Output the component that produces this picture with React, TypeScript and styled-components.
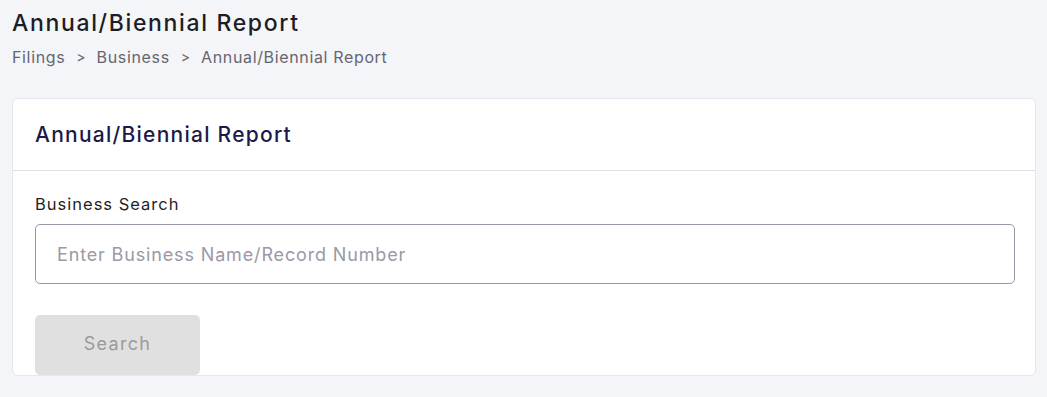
import React from "react";
import styled, { createGlobalStyle } from "styled-components";

const Global = createGlobalStyle`
  html, body { margin: 0; padding: 0; background: #f4f5f9; }
  body { font-family: "Inter", "Open Sans", sans-serif; }
  * { box-sizing: border-box; }
`;

const Page = styled.div`
  padding: 8px 11px 20px 12px;
  display: flex;
  flex-direction: column;
`;

const Title = styled.h1`
  margin: 0;
  font-size: 23px;
  line-height: 30px;
  font-weight: 500;
  letter-spacing: 1.65px;
  color: #1d1d24;
`;

const Crumbs = styled.nav`
  display: flex;
  align-items: center;
  gap: 11px;
  margin-top: 8px;
  font-size: 16px;
  line-height: 22px;
  letter-spacing: 0.65px;
  color: #66666e;
`;

const Sep = styled.span`
  font-size: 14px;
  letter-spacing: 0;
  color: #66666e;
`;

const Card = styled.section`
  margin-top: 30px;
  background: #ffffff;
  border: 1px solid #e7e8ee;
  border-radius: 6px;
  overflow: hidden;
`;

const CardHeader = styled.div`
  height: 72px;
  padding: 0 22px;
  display: flex;
  align-items: center;
  border-bottom: 1px solid #dde0e4;
`;

const CardTitle = styled.h2`
  margin: 0;
  font-size: 21px;
  font-weight: 500;
  letter-spacing: 1.25px;
  color: #1c1a4a;
`;

const CardBody = styled.div`
  padding: 22px 20px 0 22px;
  display: flex;
  flex-direction: column;
  align-items: flex-start;
`;

const Label = styled.label`
  font-size: 16.5px;
  line-height: 22px;
  letter-spacing: 1px;
  color: #1f1f24;
`;

const Input = styled.input`
  margin-top: 9px;
  width: 100%;
  height: 60px;
  border: 1px solid #9896a6;
  border-radius: 5px;
  padding: 0 21px;
  font-family: inherit;
  font-size: 18px;
  letter-spacing: 0.85px;
  color: #1f1f24;
  outline: none;
  &::placeholder { color: #9a99a8; }
`;

const Button = styled.button`
  margin-top: 31px;
  width: 165px;
  height: 60px;
  padding: 0 0 3px;
  border: none;
  border-radius: 5px;
  background: #e0e0e0;
  color: #9b9b9b;
  font-family: inherit;
  font-size: 18px;
  letter-spacing: 1.3px;
`;

export default function App() {
  return (
    <>
      <Global />
      <Page>
        <Title>Annual/Biennial Report</Title>
        <Crumbs>
          <span>Filings</span>
          <Sep>&gt;</Sep>
          <span>Business</span>
          <Sep>&gt;</Sep>
          <span>Annual/Biennial Report</span>
        </Crumbs>
        <Card>
          <CardHeader>
            <CardTitle>Annual/Biennial Report</CardTitle>
          </CardHeader>
          <CardBody>
            <Label htmlFor="bs">Business Search</Label>
            <Input id="bs" placeholder="Enter Business Name/Record Number" />
            <Button disabled>Search</Button>
          </CardBody>
        </Card>
      </Page>
    </>
  );
}
